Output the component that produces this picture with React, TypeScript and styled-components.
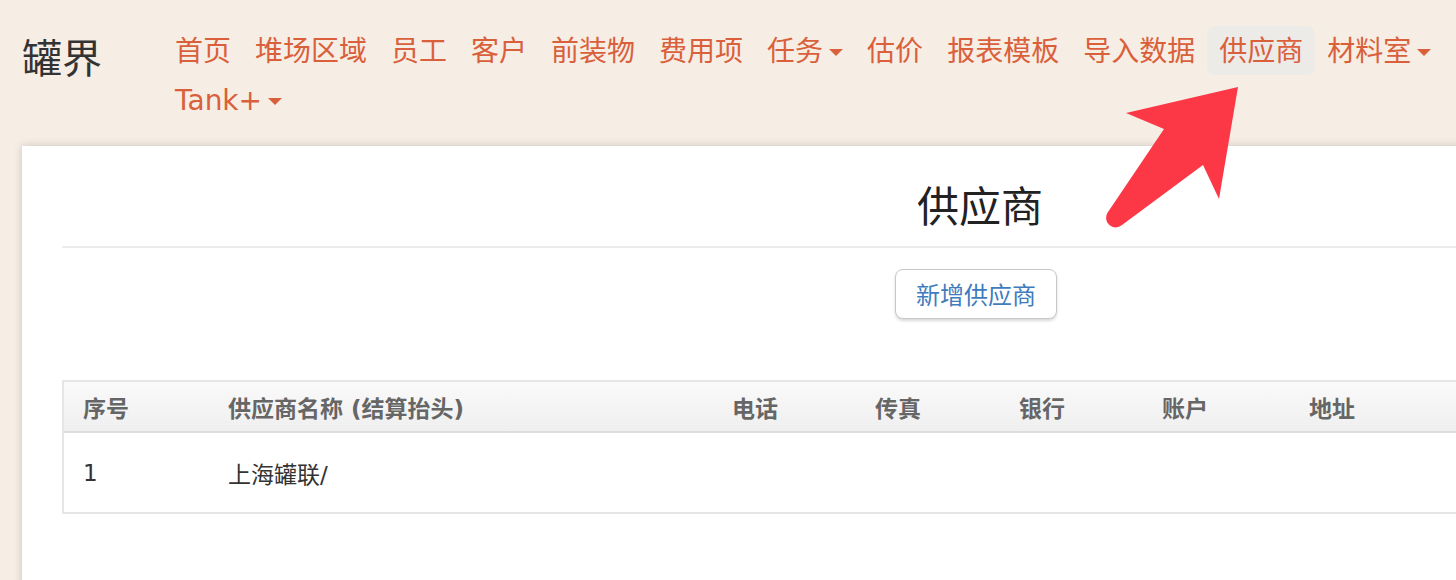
import React from "react";
import styled, { createGlobalStyle } from "styled-components";

const GlobalStyle = createGlobalStyle`
  html, body {
    margin: 0;
    padding: 0;
    overflow: hidden;
    background: #f6eee5;
  }
  body {
    font-family: "DejaVu Sans", "Noto Sans CJK SC", sans-serif;
  }
  * { box-sizing: border-box; }
`;

const Page = styled.div`
  position: relative;
  width: 1960px;
  min-height: 580px;
`;

const Header = styled.header`
  display: flex;
  align-items: flex-start;
  padding-top: 26px;
`;

const Brand = styled.div`
  width: 141px;
  margin-left: 22px;
  padding-top: 6px;
  font-family: "Noto Sans CJK SC", sans-serif;
  font-size: 40px;
  line-height: 48px;
  color: #333;
`;

const Nav = styled.nav`
  display: flex;
  flex-wrap: wrap;
  width: 1400px;
`;

const NavLink = styled.a<{ $active?: boolean }>`
  display: inline-flex;
  align-items: center;
  padding: 12px 12px 9px;
  font-size: 28px;
  line-height: 28px;
  color: #d9603b;
  border-radius: 8px;
  background: ${(p) => (p.$active ? "#edebe8" : "transparent")};
  text-decoration: none;
  white-space: nowrap;
`;

const Caret = styled.span`
  display: inline-block;
  width: 0;
  height: 0;
  margin-left: 6px;
  border-top: 7px solid #d9603b;
  border-left: 7px solid transparent;
  border-right: 7px solid transparent;
`;

const Panel = styled.main`
  margin: 22px 0 0 22px;
  width: 1916px;
  min-height: 460px;
  padding: 35px 40px;
  background: #fff;
  box-shadow: 0 0 8px rgba(0, 0, 0, 0.18);
`;

const Title = styled.h1`
  margin: 0;
  text-align: center;
  font-family: "Noto Sans CJK SC", sans-serif;
  font-weight: 400;
  font-size: 42px;
  line-height: 46px;
  color: #222;
`;

const Divider = styled.hr`
  margin: 19px 0 21px;
  border: 0;
  border-top: 2px solid #ececec;
`;

const Actions = styled.div`
  display: flex;
  justify-content: center;
  padding-right: 8px;
`;

const Button = styled.button`
  font-family: "Noto Sans CJK SC", sans-serif;
  font-size: 24px;
  line-height: 34px;
  padding: 7px 20px;
  color: #3f7bbd;
  background: #fff;
  border: 1px solid #c8c8c8;
  border-radius: 8px;
  box-shadow: 0 2px 3px rgba(0, 0, 0, 0.15);
`;

const Table = styled.div`
  margin-top: 61px;
  border: 2px solid #e6e6e6;
`;

const cols = "145px 504px 143px 144px 143px 147px 300px 1fr";

const HeadRow = styled.div`
  display: grid;
  grid-template-columns: ${cols};
  height: 51px;
  align-items: center;
  background: linear-gradient(#fafafa, #efefef);
  border-bottom: 2px solid #dddddd;
`;

const HeadCell = styled.div`
  padding: 0 19px;
  font-size: 23px;
  font-weight: 700;
  color: #666;
  white-space: nowrap;
`;

const BodyRow = styled.div`
  display: grid;
  grid-template-columns: ${cols};
  height: 79px;
  align-items: center;
`;

const Cell = styled.div`
  padding: 0 19px;
  font-size: 23px;
  color: #333;
  white-space: nowrap;
`;

const Arrow = styled.svg`
  position: absolute;
  left: 1090px;
  top: 70px;
  width: 170px;
  height: 170px;
  pointer-events: none;
`;

const links: { label: string; caret?: boolean; active?: boolean }[] = [
  { label: "首页" },
  { label: "堆场区域" },
  { label: "员工" },
  { label: "客户" },
  { label: "前装物" },
  { label: "费用项" },
  { label: "任务", caret: true },
  { label: "估价" },
  { label: "报表模板" },
  { label: "导入数据" },
  { label: "供应商", active: true },
  { label: "材料室", caret: true },
  { label: "系统", caret: true },
  { label: "Tank+", caret: true },
];

const headers = ["序号", "供应商名称 (结算抬头)", "电话", "传真", "银行", "账户", "地址", "操作"];

export default function App() {
  return (
    <>
      <GlobalStyle />
      <Page>
        <Header>
          <Brand>罐界</Brand>
          <Nav>
            {links.map((l) => (
              <NavLink key={l.label} $active={l.active}>
                {l.label}
                {l.caret && <Caret />}
              </NavLink>
            ))}
          </Nav>
        </Header>
        <Panel>
          <Title>供应商</Title>
          <Divider />
          <Actions>
            <Button>新增供应商</Button>
          </Actions>
          <Table>
            <HeadRow>
              {headers.map((h) => (
                <HeadCell key={h}>{h}</HeadCell>
              ))}
            </HeadRow>
            <BodyRow>
              <Cell>1</Cell>
              <Cell>上海罐联/</Cell>
              <Cell />
              <Cell />
              <Cell />
              <Cell />
              <Cell />
              <Cell />
            </BodyRow>
          </Table>
        </Panel>
        <Arrow viewBox="0 0 170 170">
          <path
            d="M148 17 L129 129 L113 95 L32 155 A9.6 9.6 0 0 1 18 142 L74 59 L36 43 Z"
            fill="#fc3847"
          />
        </Arrow>
      </Page>
    </>
  );
}
